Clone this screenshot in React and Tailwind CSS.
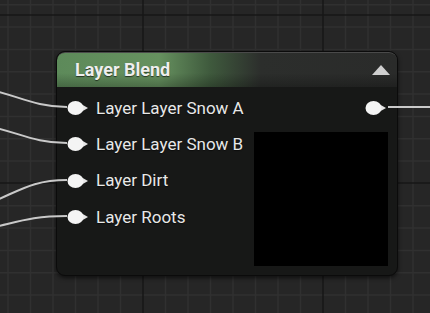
import React from "react";

const vMinor = [8, 30.5, 53, 75.5, 98, 120.5, 165.5, 188, 210.5, 233, 255.5, 278, 300.5, 345.5, 368, 390.5, 413];
const vMajor = [143, 323];
const hMinor = [4.7, 27, 49.4, 71.7, 94, 116.4, 138.7, 161, 205.7, 228, 250.4, 272.7, 295];
const hMajor = [15, 183];

function Pin() {
  return (
    <svg width="22" height="16" viewBox="0 0 22 16" className="shrink-0">
      <path d="M14 4 L21 8 L14 12 Z" fill="#e6e6e6" />
      <ellipse cx="8.5" cy="8" rx="8" ry="7" fill="#f4f4f4" />
    </svg>
  );
}

const rows = ["Layer Layer Snow A", "Layer Layer Snow B", "Layer Dirt", "Layer Roots"];

export default function App() {
  return (
    <div
      className="relative w-[430px] h-[313px] overflow-hidden bg-[#262626]"
      style={{ fontFamily: "Roboto, 'Liberation Sans', sans-serif" }}
    >
      <svg className="absolute inset-0" width="430" height="313">
        {vMinor.map((x) => (
          <line key={"v" + x} x1={x} y1="0" x2={x} y2="313" stroke="#303030" strokeWidth="1.5" />
        ))}
        {hMinor.map((y) => (
          <line key={"h" + y} x1="0" y1={y} x2="430" y2={y} stroke="#303030" strokeWidth="1.5" />
        ))}
        {vMajor.map((x) => (
          <line key={"V" + x} x1={x} y1="0" x2={x} y2="313" stroke="#171717" strokeWidth="1.5" />
        ))}
        {hMajor.map((y) => (
          <line key={"H" + y} x1="0" y1={y} x2="430" y2={y} stroke="#171717" strokeWidth="1.5" />
        ))}
      </svg>

      <div className="absolute left-[56px] top-[51px] w-[342px] h-[225px] rounded-[9px] border border-[#0b0b0b] bg-[#171817] shadow-[0_2px_4px_rgba(0,0,0,0.6)] flex flex-col overflow-hidden">
        <div className="relative h-[35px] shrink-0 flex items-center justify-between pl-[18px] pr-[6px] bg-[linear-gradient(90deg,#5d8a5a_0%,#66915f_30%,#3f5a3d_45%,#2c2e2c_60%,#2a2b2a_100%)] border-t border-[#4a4a4a] rounded-t-[8px]">
          <div className="absolute inset-x-0 bottom-0 h-[14px] bg-[linear-gradient(180deg,rgba(0,0,0,0)_0%,rgba(0,0,0,0.25)_100%)]" />
          <span className="relative text-[18px] font-bold text-[#eeeeee] leading-none [text-shadow:0_1px_1px_rgba(0,0,0,0.6)]">
            Layer Blend
          </span>
          <svg width="20" height="12" viewBox="0 0 20 12" className="relative">
            <path d="M10 1 L19 11 L1 11 Z" fill="#cfcfcf" />
          </svg>
        </div>
        <div className="flex flex-1 pt-[3px]">
          <div className="flex flex-col">
            {rows.map((r) => (
              <div key={r} className="h-[36.3px] flex items-center pl-[10px] gap-[7px]">
                <Pin />
                <span className="text-[17px] text-[#e8e8e8] leading-none [text-shadow:0_1px_1px_rgba(0,0,0,0.5)]">{r}</span>
              </div>
            ))}
          </div>
          <div className="flex-1 flex flex-col items-end pr-[9px]">
            <div className="h-[36px] flex items-center pr-[1px]">
              <Pin />
            </div>
            <div className="w-[134px] h-[134px] bg-black mt-[6px]" />
          </div>
        </div>
      </div>

      <svg className="absolute inset-0 pointer-events-none" width="430" height="313">
        <g fill="none" stroke="#c9c9c9" strokeWidth="2">
          <path d="M -40 86 C 10 88, 25 107, 67 107" />
          <path d="M -40 123 C 10 125, 25 143, 67 143" />
          <path d="M -30 210 C 15 196, 25 180, 67 180" />
          <path d="M -30 232 C 15 224, 25 216, 67 216" />
          <path d="M 388 107 L 432 107" />
        </g>
      </svg>
    </div>
  );
}
